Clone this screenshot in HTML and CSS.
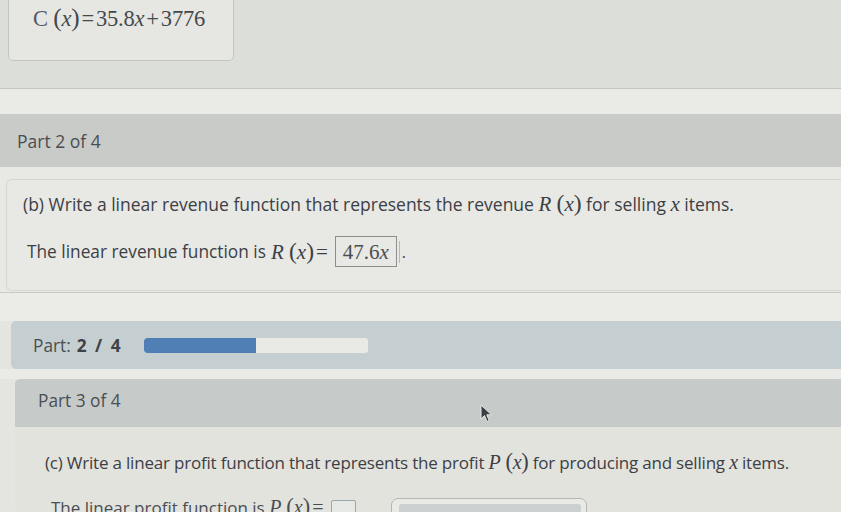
FILE: index.html
```html
<!DOCTYPE html>
<html>
<head>
<meta charset="utf-8">
<link rel="stylesheet" href="styles.css">
</head>
<body>
<div class="page">
  <div class="top">
    <div class="cost-card"><span class="math"><span class="up">C</span> <span class="paren">(</span><i>x</i><span class="paren">)</span><span class="op">=</span>35.8<i>x</i><span class="op">+</span>3776</span></div>
  </div>
  <div class="band-light"></div>
  <div class="part-head">Part 2 of 4</div>
  <div class="section">
    <div class="q-card">
      <p class="q">(b) Write a linear revenue function that represents the revenue <span class="math"><i>R</i> <span class="paren">(</span><i>x</i><span class="paren">)</span></span> for selling <span class="math"><i>x</i></span> items.</p>
      <p class="ans">The linear revenue function is <span class="math"><i>R</i> <span class="paren">(</span><i>x</i><span class="paren">)</span><span class="op">=</span></span> <span class="ans-box math">47.6<i>x</i></span><span class="dot">.</span></p>
    </div>
  </div>
  <div class="band-light2"></div>
  <div class="progress-band">
    <span class="prog-label">Part: <b>2 / 4</b></span>
    <div class="track"><div class="fill" style="width:50%"></div></div>
  </div>
  <div class="band-gap"></div>
  <div class="part-head p3">Part 3 of 4</div>
  <div class="section2">
    <p class="q q3">(c) Write a linear profit function that represents the profit <span class="math"><i>P</i> <span class="paren">(</span><i>x</i><span class="paren">)</span></span> for producing and selling <span class="math"><i>x</i></span> items.</p>
    <div class="ans3">
      <span class="ans-text">The linear profit function is <span class="math"><i>P</i> <span class="paren">(</span><i>x</i><span class="paren">)</span><span class="op">=</span></span></span>
      <span class="empty-box"></span>
      <span class="tool-box"><span class="tool-inner"></span></span>
    </div>
  </div>
  <svg class="cursor" width="14" height="20" viewBox="0 0 14 20"><path d="M1 1 L1 15 L4.5 11.5 L7 17.5 L9.2 16.6 L6.8 10.8 L11.5 10.8 Z" fill="#3a3f45" stroke="#e8e8e4" stroke-width="1"/></svg>
</div>
</body>
</html>
```

FILE: styles.css
```css
* { box-sizing: border-box; }
html, body { margin: 0; padding: 0; }
body {
  width: 841px;
  height: 512px;
  overflow: hidden;
  background: #e4e5e1;
  font-family: "Open Sans", "Noto Sans", sans-serif;
  color: #3c4045;
}
.page { position: relative; width: 841px; height: 512px; }
.math { font-family: "Liberation Serif", "DejaVu Serif", serif; }
.math i { font-style: italic; }
.paren { font-size: 1.12em; }
.op { margin: 0 2px; }

.top {
  height: 89px;
  background: #dcdeda;
  border-bottom: 1px solid #c4c6c3;
  padding-left: 8px;
}
.cost-card {
  width: 226px;
  height: 61px;
  background: #e6e7e3;
  border: 1px solid #c3c5c2;
  border-top: none;
  border-radius: 0 0 5px 5px;
  padding: 2px 0 0 24px;
  font-size: 22.5px;
  color: #44484d;
  letter-spacing: -0.2px;
}
.cost-card .up { color: #55595e; }
.band-light {
  height: 25px;
  background: #eaeae6;
}
.part-head {
  height: 53px;
  background: #c9cbc9;
  display: flex;
  align-items: center;
  padding-left: 17px;
  font-size: 17.5px;
  color: #4a4e53;
}
.section {
  height: 126px;
  background: #e8e8e4;
  padding: 12px 0 0 6px;
  border-bottom: 1px solid #c9cac7;
}
.q-card {
  height: 112px;
  border: 1px solid #d6d7d3;
  border-right: none;
  border-radius: 6px 0 0 6px;
  padding: 10px 0 0 16px;
}
.q {
  margin: 0;
  font-size: 17.5px;
  color: #3c4045;
  white-space: nowrap;
}
.q .math { font-size: 21px; }
.ans {
  margin: 19px 0 0 4px;
  font-size: 17.3px;
  display: flex;
  align-items: center;
  white-space: nowrap;
}
.ans > .math { font-size: 21px; margin-left: 5px; }
.ans-box {
  display: inline-block;
  margin-left: 5px;
  border: 1px solid #8d8f8e;
  padding: 2px 6px 1px 7px;
  font-size: 20px;
  color: #4a4e53;
  height: 31px;
  width: 62px;
  line-height: 26px;
}
.dot { font-size: 16px; margin-left: 2px; border-left: 1px solid #b8bab8; padding-left: 2px; height: 22px; display: inline-flex; align-items: flex-end; }

.band-light2 {
  height: 28px;
  background: #ebebe7;
}
.progress-band {
  height: 48px;
  margin-left: 11px;
  background: #c5ced0;
  border-radius: 5px 0 0 5px;
  display: flex;
  align-items: center;
  padding-left: 22px;
  gap: 23px;
}
.prog-label { font-size: 17.3px; color: #4a4e53; word-spacing: 1.5px; }
.prog-label b { font-weight: 700; color: #3e4247; word-spacing: 4px; }
.track {
  width: 224px;
  height: 15px;
  background: #e9eae6;
  border-radius: 3px;
  overflow: hidden;
}
.fill { height: 100%; background: #4f7fb5; border-radius: 3px 0 0 3px; }
.band-gap {
  height: 10px;
  background: #eaeae6;
}
.part-head.p3 {
  margin-left: 15px;
  height: 48px;
  background: #c6cac9;
  padding-left: 23px;
  align-items: flex-start;
  padding-top: 10px;
  font-size: 17.3px;
  border-radius: 5px 0 0 0;
}
.section2 {
  height: 84px;
  background: #e3e3de;
  margin-left: 15px;
  padding: 22px 0 0 30px;
}
.q3 { font-size: 17px; letter-spacing: -0.2px; }
.q3 .math { font-size: 20px; }
.ans3 {
  margin-top: 14px;
  display: flex;
  align-items: flex-start;
  height: 40px;
}
.ans-text {
  font-size: 17px;
  color: #4a4e53;
  padding-left: 6px;
  padding-top: 5px;
  white-space: nowrap;
}
.ans-text .math { font-size: 20px; }
.empty-box {
  margin-left: 6px;
  margin-top: 11px;
  width: 25px;
  height: 30px;
  border: 1px solid #9aa7ad;
  border-radius: 2px;
  background: #e6e8e6;
}
.tool-box {
  margin-left: 35px;
  margin-top: 9px;
  width: 196px;
  height: 40px;
  border: 1px solid #b5b6b1;
  border-radius: 7px;
  background: #e9e9e5;
  padding: 5px 5px 0 7px;
}
.tool-inner {
  display: block;
  height: 100%;
  background: #ccd0d0;
  border-radius: 3px 3px 0 0;
}
.cursor {
  position: absolute;
  left: 480px;
  top: 404px;
}
```
